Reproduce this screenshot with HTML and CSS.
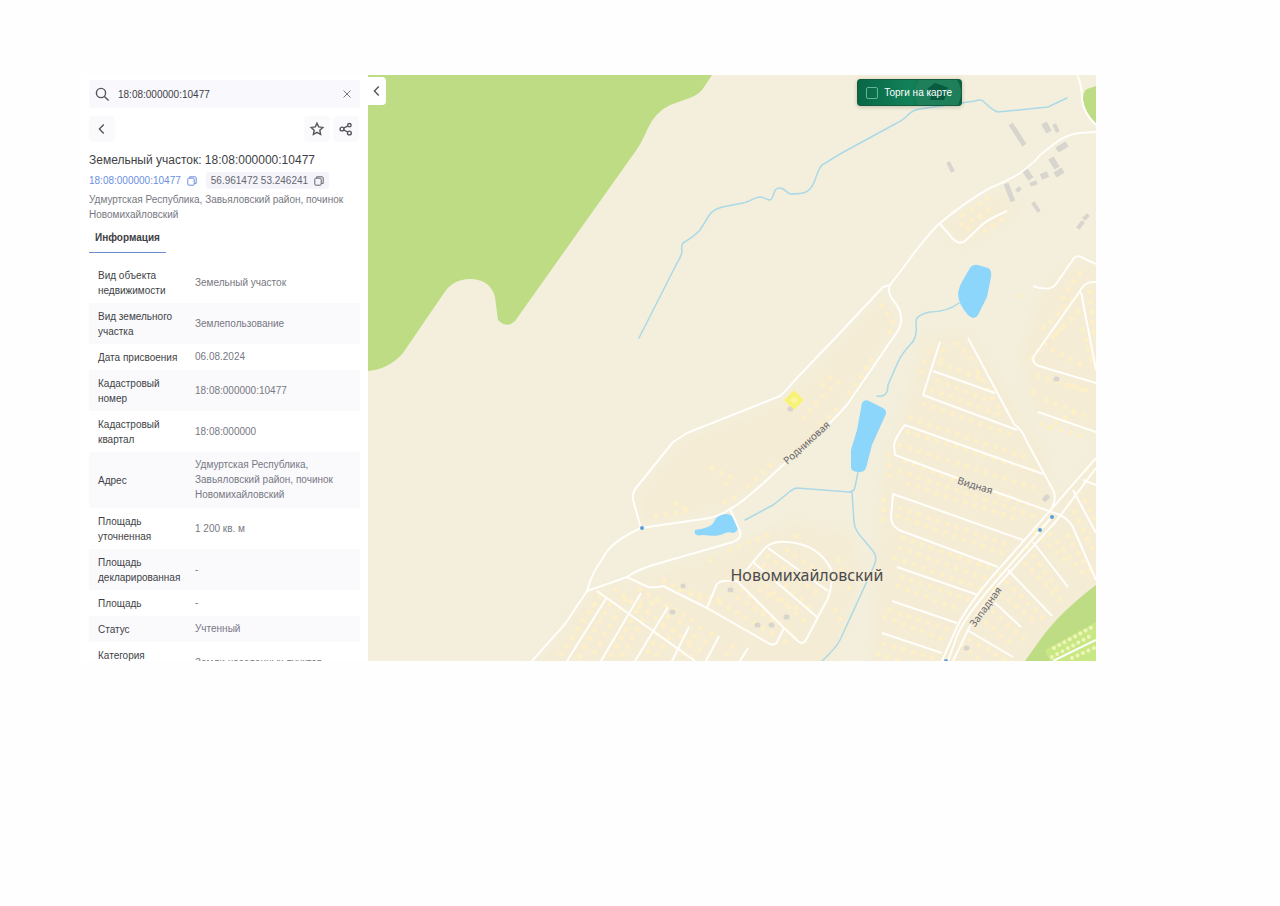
FILE: index.html
```html
<!DOCTYPE html>
<html lang="ru">
<head>
  <meta charset="UTF-8">
  <meta name="viewport" content="width=device-width, initial-scale=1.0">
  <title>Земельный участок: 18:08:000000:10477</title>
  <link rel="stylesheet" href="styles.css">
</head>
<body>
  <main class="viewer">
    <aside class="panel">
      <form class="search">
        <svg class="icon" viewBox="0 0 16 16"><circle cx="7" cy="7" r="4.6"/><path d="M10.4 10.4L14.6 14.4"/></svg>
        <input type="text" class="search-input" aria-label="Поиск" value="18:08:000000:10477">
        <button type="button" class="clear" aria-label="Очистить"><svg class="icon-clear" viewBox="0 0 10 10"><path d="M1.5 1.5l7 7M8.5 1.5l-7 7"/></svg></button>
      </form>

      <div class="toolbar">
        <button type="button" class="tool" aria-label="Назад"><svg class="icon" viewBox="0 0 16 16"><path d="M9.8 3.6L5.4 8l4.4 4.4"/></svg></button>
        <div class="tools">
          <button type="button" class="tool" aria-label="В избранное"><svg class="icon" viewBox="0 0 16 16"><path d="M8 2.2l1.7 3.7 4.1.5-3 2.8.8 4.1L8 11.3l-3.6 2 .8-4.1-3-2.8 4.1-.5z"/></svg></button>
          <button type="button" class="tool" aria-label="Поделиться"><svg class="icon" viewBox="0 0 16 16"><circle cx="4" cy="8" r="1.9"/><circle cx="11.4" cy="4.2" r="1.7"/><circle cx="11.4" cy="12" r="1.9"/><path d="M5.7 7.1l4.2-2.2M5.7 8.9l4 2.1"/></svg></button>
        </div>
      </div>

      <h1 class="title">Земельный участок: 18:08:000000:10477</h1>
      <div class="codes">
        <a href="#" class="code-link">18:08:000000:10477 <svg class="icon-copy" viewBox="0 0 10 10"><rect x=".8" y="2.2" width="6.4" height="7" rx="1"/><path d="M2.6 2V.8h5.6q1 0 1 1V7.4H7.4"/></svg></a>
        <button type="button" class="coords">56.961472 53.246241 <svg class="icon-copy" viewBox="0 0 10 10"><rect x=".8" y="2.2" width="6.4" height="7" rx="1"/><path d="M2.6 2V.8h5.6q1 0 1 1V7.4H7.4"/></svg></button>
      </div>
      <p class="address">Удмуртская Республика, Завьяловский район, починок Новомихайловский</p>
      <button type="button" class="tab">Информация</button>

      <table class="info">
        <tr><th>Вид объекта недвижимости</th><td>Земельный участок</td></tr>
        <tr><th>Вид земельного участка</th><td>Землепользование</td></tr>
        <tr><th>Дата присвоения</th><td>06.08.2024</td></tr>
        <tr><th>Кадастровый номер</th><td>18:08:000000:10477</td></tr>
        <tr><th>Кадастровый квартал</th><td>18:08:000000</td></tr>
        <tr><th>Адрес</th><td>Удмуртская Республика, Завьяловский район, починок Новомихайловский</td></tr>
        <tr><th>Площадь уточненная</th><td>1 200 кв. м</td></tr>
        <tr><th>Площадь декларированная</th><td>-</td></tr>
        <tr><th>Площадь</th><td>-</td></tr>
        <tr><th>Статус</th><td>Учтенный</td></tr>
        <tr><th>Категория<br>земель</th><td>Земли населенных пунктов</td></tr>
      </table>
    </aside>

    <section class="map">
      <svg class="map-canvas" viewBox="368 75 728 586" preserveAspectRatio="xMidYMid slice">
        <defs>
          <filter id="soft" x="-10%" y="-10%" width="120%" height="120%"><feGaussianBlur stdDeviation="5"/></filter>
        </defs>
        <rect class="land" x="368" y="75" width="728" height="586"/>

        <!-- built-up areas -->
        <g class="district" filter="url(#soft)">
          <path d="M883 295L900 318 847 405 783 465 730 509 641 525 637 495 680 440 785 398z"/>
          <path d="M940 222L1005 190 1018 215 960 248z"/>
          <path d="M530 670L587 593 740 545 790 520 850 530 865 570 830 670z"/>
          <path d="M925 335L968 330 1045 450 1055 500 1110 440 1110 590 1020 670H870L880 480 900 420z"/>
          <path d="M1040 290L1078 258 1110 270V445L1030 410 1020 355z"/>
        </g>

        <!-- forest -->
        <path class="forest" d="M368 75H712L702 90Q697 96 684 100L670 105Q655 112 647 130 641 144 635 152L515 321Q507 329 498 320L495 297Q490 279 470 279 453 279 444 293L403 353Q389 369 368 371z"/>
        <path class="forest" d="M1096 86L1087 89Q1083 91 1083 100 1085 114 1096 123z"/>
        <path class="forest" d="M1025 661L1040 640Q1059 613 1096 585V661z"/>
        <path class="garden" d="M1045 650L1087 627 1096 622V661H1050z"/>

        <!-- houses -->
        <g class="houses">
          <path d="M882 306L893 322 888 338M872 360L848 395M836 410L820 425M770 465L748 486M734 498L720 504M838 382L820 398 800 424M712 468L732 478 720 488M676 504L690 511 655 516M823 385L835 372"/>
          <path d="M963 215L975 207 992 195M962 224L978 218 995 204M985 231L1004 218M968 228L974 220"/>
          <path d="M1020 296H1022M1063 298L1078 274 1085 272M1072 300L1042 330M1060 330L1028 360M1078 312L1052 338M1090 292L1094 340M1083 330L1092 362M1053 350L1085 367M1038 376L1093 392M1072 386L1090 393M1034 392L1036 393M1046 400L1090 418M1042 424L1088 438M1048 428L1076 412"/>
          <path d="M928 352L920 376M943 350L940 367M957 344L966 352 975 366M940 364L984 380M938 381L992 401M932 390L1005 417M924 404L1012 435M978 372L1000 412"/>
          <path d="M910 418L1025 457M908 432L1038 472M900 445L1035 488M905 461L952 479M990 492L1045 509M900 471L1038 517M908 484L1020 520M888 455L889 480M900 508L1012 546M898 516L1005 554M903 538L990 568M900 548L985 578M895 558L985 590M902 577L970 600M898 586L963 611M890 610L955 632M885 617L950 642M884 644L940 660M878 654L905 662M884 500L882 525"/>
          <path d="M1035 532L1070 565M1044 526L1086 577M1028 548L1060 594M1018 556L1060 600M1068 536L1090 572M1080 492L1095 520M1087 470L1094 475M1070 503L1092 548M1000 575L1043 618M993 588L1040 625M986 605L1025 640M978 616L1015 647M970 640L1005 660M962 645L980 660"/>
          <path d="M600 596L560 655M610 604L577 660M625 600L593 655M641 603L610 658M652 603L622 655M668 617L643 660M680 622L653 660M700 628L680 660M712 634L690 660M733 646L722 660M615 590L690 642M640 590L700 625"/>
          <path d="M664 581L715 606M720 603L772 633M730 592L775 622M742 590L790 632M752 573L805 622M764 566L815 612M768 556L822 597M787 550L826 578M797 536L793 530M730 550L770 534M710 560L715 558M838 560L850 590M835 610L845 628M785 642L795 636M760 590L800 610M680 590L720 600"/>
        </g>
        <path class="garden-houses" d="M1054 648L1092 627M1052 657L1094 634M1072 658L1094 648"/>
        <path class="road" d="M1053 661L1096 640"/>

        <!-- buildings -->
        <g class="buildings">
          <path class="long" d="M1012 126L1023 143M1007 186L1012 199"/>
          <path class="mid" d="M1044 123L1049 132M1057 150L1067 144M1051 158L1057 168M1055 175L1063 170M1024 169L1031 179M1041 177L1048 174"/>
          <path class="small" d="M1055 126L1057 130M949 164L952 170M1032 184L1035 183M1018 190L1019 189M1034 204L1038 210M1085 218L1087 216M1079 227L1082 223"/>
          <path class="spots" d="M1056 379H1057M1045 499L1047 497M966 648H967M790 409H791M672 612H673M683 586H683M730 590H731M757 625H758M771 625H772M786 617H787"/>
        </g>

        <!-- water -->
        <g class="river">
          <path d="M1067 98L1048 107 998 112Q993 111 983 101 980 99 975 101L920 109Q912 110 907 116 903 120 895 124L840 154 822 165Q819 168 815 180C810 194 803 194 790 194 786 192 784 188 780 188 774 188 775 192 772 198 770 203 766 197 760 197 755 197 749 202 743 203L727 206Q715 208 710 214L700 230Q696 235 683 243 681 246 682 251 682 255 676 265L639 338"/>
          <path d="M959 303Q947 312 930 312 915 315 916 323 918 338 910 345 903 352 898 362L888 385Q888 398 877 396"/>
          <path d="M858 472L855 487Q854 492 849 492L797 488Q792 489 787 494L773 505 745 520M852 492L854 522Q855 531 863 539L873 551Q878 557 874 566L840 640Q836 648 822 661"/>
        </g>
        <g class="pond">
          <path d="M970 268Q973 264 978 265L988 268Q992 270 991 277L987 297 978 315Q974 321 968 315 958 304 958 293 959 286 963 280z"/>
          <path d="M862 403Q864 399 869 401L883 408Q888 411 885 416L872 445 866 468Q865 472 859 472 852 472 851 468V450L857 430z"/>
          <path d="M695 530Q711 528 714 522 717 514 727 514 733 514 738 526 738 532 733 533 728 531 723 534 717 537 703 535 693 537 695 530z"/>
        </g>

        <!-- roads -->
        <g class="road">
          <path d="M1096 132L1079 133Q1065 135 1054 144L1040 155Q1034 163 1020 173 1013 178 990 188 968 200 940 223 927 235 903 268L890 285 883 287 840 333 795 380Q787 390 780 396L687 433 673 442 636 488Q632 493 633 500L641 528"/>
          <path d="M890 285Q887 292 893 300 907 316 897 332L847 405Q838 415 830 423L783 465Q744 502 730 509 719 517 703 519L641 528Q610 542 603 558 591 574 587 591L565 624 532 661"/>
          <path d="M587 591L627 577Q637 570 653 565L733 542Q742 539 740 531L730 509M627 577L648 587Q656 588 663 586L707 608 770 644Q776 646 778 640L784 628M707 608L716 586Q718 581 725 581H737L784 628 799 642Q804 645 807 638L828 598Q834 579 831 569 818 544 787 542 774 541 766 547L753 562 737 582"/>
          <path d="M768 548L828 591M753 562L817 617M597 591L695 661M607 597L567 661M641 593L601 661M668 607L635 661M689 627L672 661M719 636L706 661M748 648L740 661"/>
          <path d="M1077 75Q1082 84 1082 100 1084 114 1096 125M940 224L953 239Q959 245 965 241L983 224Q989 219 1007 211"/>
          <path d="M1033 286Q1050 292 1056 284L1074 258Q1077 255 1081 257L1096 264M1096 282Q1084 281 1080 291L1034 356Q1031 363 1039 366L1096 383M1081 292L1096 370M1038 412L1096 432"/>
          <path d="M940 342L923 395 1017 430M933 371L995 393M968 338L1014 424Q1023 431 1026 440L1053 490Q1057 497 1052 508"/>
          <path d="M1043 474L905 425Q896 436 894 445L895 455 957 478 1060 515Q1071 520 1075 532L1096 580M1023 540L893 494 891 517Q891 525 899 530L998 567M897 567L978 595M892 601L957 623M882 633L942 653"/>
          <path d="M1083 480L1096 485M1073 490L1096 533M1033 542L1068 587M1008 570L1052 616M995 603L1021 627M967 630L1013 657"/>
          <path d="M1096 458L1007 560Q970 600 957 627L942 661M1096 468L1057 520 1000 583Q976 614 968 630L953 661M1051 518L990 588Q963 620 957 636L948 661"/>
        </g>

        <path class="parcel" d="M794 393L801 400 794 407 787 400z"/>
        <g class="stops">
          <circle cx="642" cy="528" r="2"/><circle cx="1052" cy="517" r="2"/><circle cx="1040" cy="530" r="2"/><circle cx="946" cy="661" r="2"/>
        </g>

        <text class="label-town" x="807" y="581">Новомихайловский</text>
        <text class="label-street" x="807" y="446" transform="rotate(-42 807 443)">Родниковая</text>
        <text class="label-street" x="975" y="489" transform="rotate(17 975 486)">Видная</text>
        <text class="label-street" x="986" y="610" transform="rotate(-54 986 607)">Западная</text>
      </svg>

      <button type="button" class="collapse" aria-label="Свернуть панель"><svg class="icon" viewBox="0 0 16 16"><path d="M9.8 3.6L5.4 8l4.4 4.4"/></svg></button>
      <label class="trades">
        <svg class="trades-art" viewBox="0 0 46 26"><circle cx="23" cy="13" r="23"/><path d="M12 9l8-6 6 2 8 3-4 2 1 5-2 5H15l2-9z"/></svg>
        <input type="checkbox" class="trades-check">
        <span class="trades-text">Торги на карте</span>
      </label>
    </section>
  </main>
</body>
</html>
```
FILE: styles.css
```css
* {
  box-sizing: border-box;
}
body {
  margin: 0;
  background: #fefefe;
  color: #3e3f45;
  font: 10px/15px "Liberation Sans", Arial, sans-serif;
}
button, input {
  font: inherit;
  color: inherit;
  border: 0;
  padding: 0;
  margin: 0;
  background: none;
}
.viewer {
  display: grid;
  grid-template-columns: 287px 1fr;
  margin: 75px 184px 75px 81px;
}

/* side panel, cut at the height of the map */
.panel {
  height: 0;
  min-height: 100%;
  overflow: hidden;
  padding: 5px 8px 0;
  background: #fff;
}
.icon {
  display: block;
  width: 16px;
  height: 16px;
  fill: none;
  stroke: #55565c;
  stroke-width: 1.4;
}
.search {
  display: flex;
  align-items: center;
  gap: 8px;
  height: 28px;
  padding: 0 8px 0 5px;
  background: #f8f8fd;
  border-radius: 3px;
}
.search-input {
  flex: 1;
  min-width: 0;
  outline: none;
}
.icon-clear {
  display: block;
  width: 10px;
  height: 10px;
  fill: none;
  stroke: #77787e;
}
.toolbar {
  display: flex;
  justify-content: space-between;
  margin-top: 8px;
  padding-right: 1px;
}
.tools {
  display: flex;
  gap: 3px;
}
.tool {
  display: grid;
  place-items: center;
  width: 26px;
  height: 26px;
  background: #fafafd;
  border-radius: 4px;
}
.title {
  margin: 10px 0 3px;
  font-size: 12px;
  line-height: 17px;
  font-weight: 400;
  white-space: nowrap;
}
.codes {
  display: flex;
  align-items: center;
  gap: 9px;
  white-space: nowrap;
}
.code-link, .coords {
  display: flex;
  align-items: center;
  gap: 6px;
}
.code-link {
  color: #6c8fe0;
  text-decoration: none;
}
.coords {
  height: 17px;
  padding: 0 5px;
  color: #66676f;
  background: #f4f4fa;
  border-radius: 3px;
}
.icon-copy {
  width: 10px;
  height: 10px;
  fill: none;
  stroke: currentColor;
}
.address {
  margin: 3px 0 8px;
  color: #77787f;
}
.tab {
  display: block;
  height: 23px;
  padding: 0 6px 7px;
  font-weight: 700;
  border-bottom: 1px solid #6c8bd0;
}
.info {
  width: 100%;
  margin-top: 9px;
  border-collapse: collapse;
  table-layout: fixed;
}
.info th, .info td {
  padding: 6px 8px 5px 9px;
  font-weight: 400;
  text-align: left;
  vertical-align: middle;
}
.info th {
  width: 97px;
  padding-right: 0;
}
.info td {
  padding-top: 5px;
  padding-bottom: 6px;
  color: #777882;
}
.info tr:nth-child(even) {
  background: #fafafd;
}

/* map */
.map {
  position: relative;
}
.map-canvas {
  display: block;
  width: 100%;
  aspect-ratio: 728 / 586;
}
.land {
  fill: #f3efdc;
}
.district {
  fill: #f4ecd5;
}
.forest {
  fill: #bddc84;
}
.garden {
  fill: #c8e885;
}
.houses path, .garden-houses {
  fill: none;
  stroke: #fdefc8;
  stroke-width: 5;
  stroke-linecap: round;
  stroke-dasharray: 0 10;
}
.garden-houses {
  stroke: #eff5b8;
  stroke-width: 4;
  stroke-dasharray: 0 6;
}
.buildings path {
  stroke: #d8d4ce;
  stroke-width: 5;
}
.buildings .long {
  stroke-linecap: square;
}
.buildings .mid {
  stroke-width: 6;
}
.buildings .small {
  stroke-width: 4;
  stroke-linecap: square;
}
.buildings .spots {
  stroke-linecap: round;
}
.river path {
  fill: none;
  stroke: #abd9e8;
  stroke-width: 1.5;
  stroke-linecap: round;
}
.pond {
  fill: #8dd6fb;
}
.road {
  fill: none;
  stroke: #fffefb;
  stroke-width: 2;
  stroke-linejoin: round;
}
.parcel {
  fill: #fbf4a0;
  stroke: #f8f374;
  stroke-width: 4;
}
.stops {
  fill: #5b9fd4;
}
.label-town, .label-street {
  font-family: "Noto Sans", sans-serif;
  text-anchor: middle;
  fill: #4b4b4d;
  paint-order: stroke;
  stroke: #f4ecd5;
  stroke-width: 2;
}
.label-town {
  font-size: 16px;
}
.label-street {
  font-size: 10px;
  fill: #66666b;
}
.collapse {
  position: absolute;
  top: 2px;
  left: 0;
  display: grid;
  place-items: center;
  width: 18px;
  height: 28px;
  background: #fff;
  border-radius: 0 4px 4px 0;
}
.trades {
  position: absolute;
  top: 4px;
  right: 134px;
  display: flex;
  align-items: center;
  gap: 6px;
  height: 27px;
  padding: 0 9px 0 8px;
  overflow: hidden;
  color: #fff;
  white-space: nowrap;
  background: linear-gradient(90deg, #086747, #128158 50%, #096346);
  border: 1px solid #175c40;
  border-radius: 3px;
  box-shadow: 0 1px 4px rgba(0, 0, 0, .2);
}
.trades-art {
  position: absolute;
  top: 0;
  right: 0;
  width: 46px;
  height: 26px;
}
.trades-art circle {
  fill: #1f7f5b;
}
.trades-art path {
  fill: #075c40;
}
.trades-check {
  appearance: none;
  width: 12px;
  height: 12px;
  border: 1px solid #65b596;
  border-radius: 2px;
}
.trades-text {
  position: relative;
}
```
